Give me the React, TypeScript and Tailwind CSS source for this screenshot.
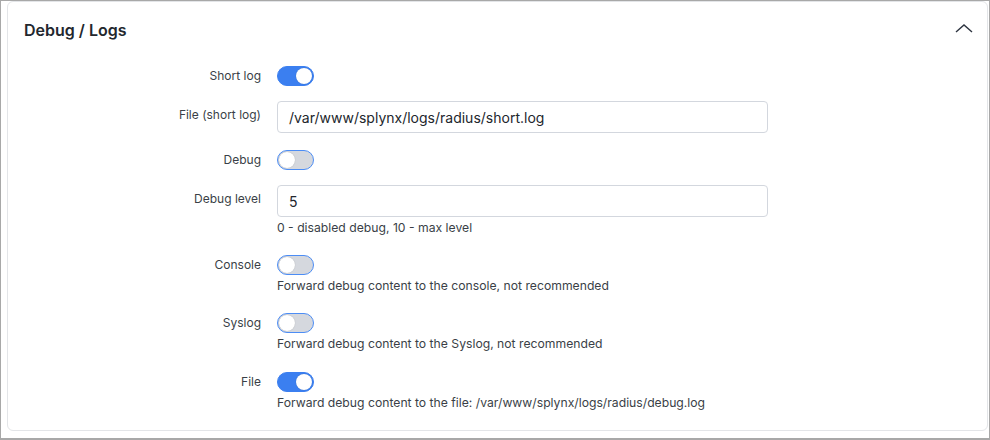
import React from 'react'

type ToggleProps = { on: boolean }

const Toggle = ({ on }: ToggleProps) => (
  <div
    className={`relative h-[20px] w-[37px] shrink-0 rounded-full border ${
      on ? 'border-[#3b7ff0] bg-[#3b7ff0]' : 'border-[#4c8df5] bg-[#d5d8de]'
    }`}
  >
    <div
      className={`absolute top-[1px] h-[16px] w-[16px] rounded-full bg-white shadow-[0_0_1px_rgba(0,0,0,0.25)] ${
        on ? 'right-[1px]' : 'left-[1px]'
      }`}
    />
  </div>
)

const Label = ({ children, pad = '' }: { children: React.ReactNode; pad?: string }) => (
  <div className={`w-[253px] shrink-0 text-right text-[12px] leading-5 text-[#3a3f47] ${pad}`}>
    {children}
  </div>
)

const Help = ({ children }: { children: React.ReactNode }) => (
  <div className="mt-[3px] text-[12.2px] leading-4 text-[#3a3f47]">{children}</div>
)

const TextInput = ({ value }: { value: string }) => (
  <div className="flex h-[32px] w-[491px] items-center rounded-[4px] border border-[#d3d7de] bg-white px-[11px] text-[14px] text-[#22262c]">
    {value}
  </div>
)

export default function App() {
  return (
    <div
      className="h-[440px] w-[990px] border-b-2 border-l border-r border-t border-[#a8a8a8] bg-white pb-[7px] pl-[6px] pr-[1px]"
      style={{ fontFamily: 'Inter, "Noto Sans", sans-serif' }}
    >
      <div className="h-full rounded-[6px] border border-[#e3e5e8] bg-white">
        <div className="flex h-[56px] items-center justify-between pl-[16px] pr-[14px]">
          <h2 className="text-[16px] font-semibold text-[#23272e]">Debug / Logs</h2>
          <svg width="18" height="9" viewBox="0 0 18 9" fill="none" className="mt-[-3px]">
            <polyline points="1,8 9,1 17,8" stroke="#2d3440" strokeWidth="1.4" />
          </svg>
        </div>

        <div className="flex flex-col">
          <div className="mt-[8px] flex gap-[16px]">
            <Label>Short log</Label>
            <Toggle on />
          </div>

          <div className="mt-[15px] flex gap-[16px]">
            <Label pad="pt-[4px]">File (short log)</Label>
            <TextInput value="/var/www/splynx/logs/radius/short.log" />
          </div>

          <div className="mt-[17px] flex gap-[16px]">
            <Label>Debug</Label>
            <Toggle on={false} />
          </div>

          <div className="mt-[15px] flex gap-[16px]">
            <Label pad="pt-[4px]">Debug level</Label>
            <div>
              <TextInput value="5" />
              <Help>0 - disabled debug, 10 - max level</Help>
            </div>
          </div>

          <div className="mt-[19px] flex gap-[16px]">
            <Label>Console</Label>
            <div>
              <Toggle on={false} />
              <Help>Forward debug content to the console, not recommended</Help>
            </div>
          </div>

          <div className="mt-[19px] flex gap-[16px]">
            <Label>Syslog</Label>
            <div>
              <Toggle on={false} />
              <Help>Forward debug content to the Syslog, not recommended</Help>
            </div>
          </div>

          <div className="mt-[20px] flex gap-[16px]">
            <Label>File</Label>
            <div>
              <Toggle on />
              <Help>Forward debug content to the file: /var/www/splynx/logs/radius/debug.log</Help>
            </div>
          </div>
        </div>
      </div>
    </div>
  )
}
